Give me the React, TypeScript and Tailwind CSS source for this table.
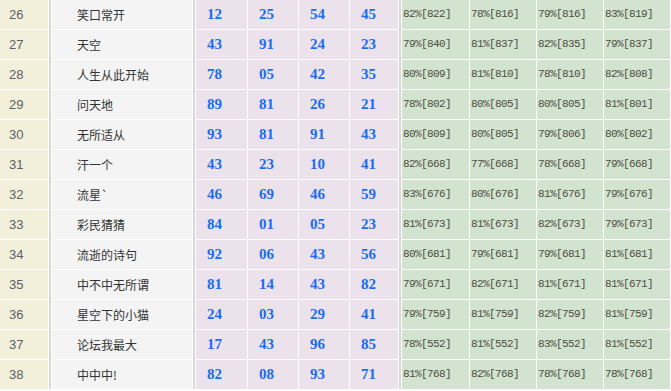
const rows: [string, string, string[], string[]][] = [
  ["26", "笑口常开", ["12", "25", "54", "45"], ["82%[822]", "78%[816]", "79%[816]", "83%[819]"]],
  ["27", "天空", ["43", "91", "24", "23"], ["79%[840]", "81%[837]", "82%[835]", "79%[837]"]],
  ["28", "人生从此开始", ["78", "05", "42", "35"], ["80%[809]", "81%[810]", "78%[810]", "82%[808]"]],
  ["29", "问天地", ["89", "81", "26", "21"], ["78%[802]", "80%[805]", "80%[805]", "81%[801]"]],
  ["30", "无所适从", ["93", "81", "91", "43"], ["80%[809]", "80%[805]", "79%[806]", "80%[802]"]],
  ["31", "汗一个", ["43", "23", "10", "41"], ["82%[668]", "77%[668]", "78%[668]", "79%[668]"]],
  ["32", "流星`", ["46", "69", "46", "59"], ["83%[676]", "80%[676]", "81%[676]", "79%[676]"]],
  ["33", "彩民猜猜", ["84", "01", "05", "23"], ["81%[673]", "81%[673]", "82%[673]", "79%[673]"]],
  ["34", "流逝的诗句", ["92", "06", "43", "56"], ["80%[681]", "79%[681]", "79%[681]", "81%[681]"]],
  ["35", "中不中无所谓", ["81", "14", "43", "82"], ["79%[671]", "82%[671]", "81%[671]", "81%[671]"]],
  ["36", "星空下的小猫", ["24", "03", "29", "41"], ["79%[759]", "81%[759]", "82%[759]", "81%[759]"]],
  ["37", "论坛我最大", ["17", "43", "96", "85"], ["78%[552]", "81%[552]", "83%[552]", "81%[552]"]],
  ["38", "中中中!", ["82", "08", "93", "71"], ["81%[768]", "82%[768]", "78%[768]", "78%[768]"]],
];

const Band = () => <div className="mx-px h-[389px] w-[2px] shrink-0 bg-[#d8d8d8]" />;

export default function App() {
  return (
    <div className="flex h-[391px] w-[671px] items-start overflow-hidden bg-white">
      {/* index column */}
      <div className="flex w-[48px] shrink-0 flex-col gap-px">
        {rows.map((r) => (
          <div
            key={r[0]}
            className="flex h-[29px] items-center bg-[#f2f0da] pl-[9px] text-[13px] text-[#5a5f6a]"
            style={{ fontFamily: '"Liberation Sans", Arial, sans-serif' }}
          >
            {r[0]}
          </div>
        ))}
      </div>
      <Band />
      {/* names */}
      <div className="flex w-[140px] shrink-0 flex-col gap-px">
        {rows.map((r) => (
          <div
            key={r[0]}
            className="flex h-[29px] items-center bg-[#f4f4f4] pl-[25px] text-[12px] text-[#333]"
            style={{ fontFamily: '"Noto Sans CJK SC", sans-serif' }}
          >
            {r[1]}
          </div>
        ))}
      </div>
      <Band />
      {/* numbers */}
      <div className="grid shrink-0 grid-cols-[51px_50px_50px_48px] gap-px">
        {rows.map((r) =>
          r[2].map((n, i) => (
            <div
              key={r[0] + "n" + i}
              className="flex h-[29px] items-center bg-[#ebe2eb] pl-[11px] text-[15px] font-bold text-[#1a6cf2]"
              style={{ fontFamily: '"Liberation Serif", "Times New Roman", serif' }}
            >
              {n}
            </div>
          ))
        )}
      </div>
      <Band />
      {/* percentages */}
      <div className="grid shrink-0 grid-cols-[67px_66px_66px_66px] gap-px">
        {rows.map((r) =>
          r[3].map((p, i) => (
            <div
              key={r[0] + "p" + i}
              className="flex h-[29px] items-center bg-[#d2e3d0] pl-px text-[11px] tracking-[-0.6px] text-[#4d4d40]"
              style={{ fontFamily: '"Liberation Mono", "Courier New", monospace' }}
            >
              {p}
            </div>
          ))
        )}
      </div>
      <Band />
    </div>
  );
}
